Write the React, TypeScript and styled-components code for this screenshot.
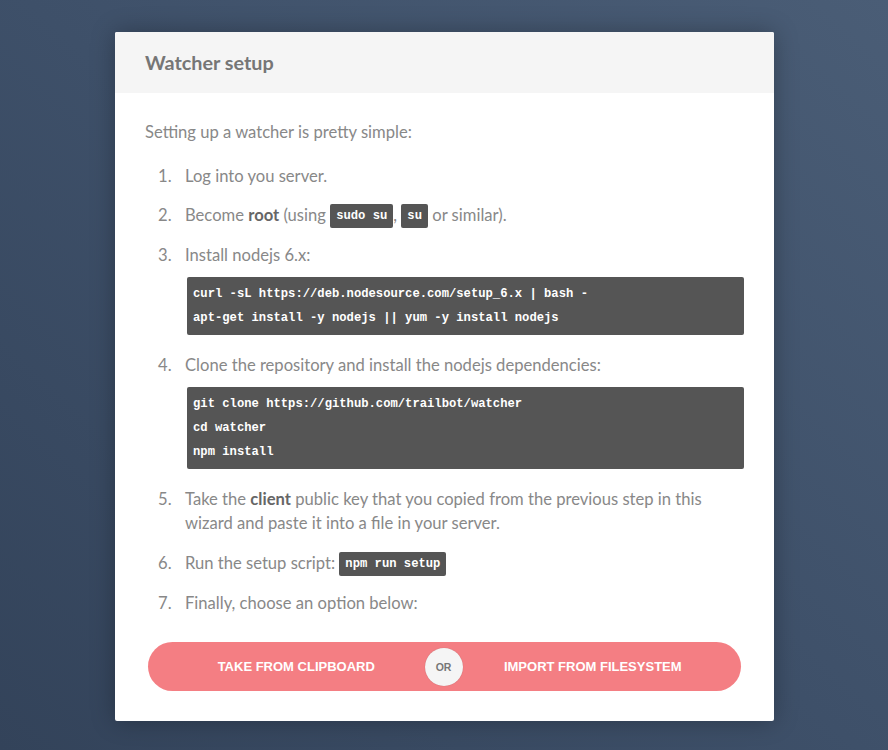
import React from "react";
import styled, { createGlobalStyle } from "styled-components";

const Global = createGlobalStyle`
  html, body { margin: 0; padding: 0; }
  body {
    width: 888px;
    height: 750px;
    overflow: hidden;
    background: linear-gradient(42deg, #33435a 0%, #3e5069 50%, #4a5d76 100%);
    font-family: Lato, "Open Sans", sans-serif;
  }
`;

const Page = styled.div`
  display: flex;
  justify-content: center;
  padding-top: 32px;
  height: 750px;
  box-sizing: border-box;
`;

const Card = styled.div`
  width: 659px;
  height: 689px;
  background: #fff;
  border-radius: 2px;
  box-shadow: 0 0 24px rgba(0, 0, 0, 0.28);
  display: flex;
  flex-direction: column;
  margin-left: 1px;
`;

const Header = styled.div`
  background: #f5f5f5;
  height: 65px;
  display: flex;
  align-items: center;
  padding: 0 30px;
  border-radius: 2px 2px 0 0;
`;

const Title = styled.h1`
  margin: 0;
  font-size: 19.8px;
  font-weight: 700;
  color: #767676;
  transform: translateY(-1px);
`;

const Body = styled.div`
  padding: 27px 30px 30px 30px;
  color: #888;
  font-size: 16.6px;
  line-height: 24px;
`;

const Intro = styled.p`
  margin: 0 0 20px 0;
`;

const Steps = styled.ol`
  list-style: none;
  margin: 0;
  padding: 0 0 0 13px;
  display: flex;
  flex-direction: column;
`;

const Step = styled.li<{ $gap?: number }>`
  display: flex;
  margin: 0 0 ${(p) => p.$gap ?? 15}px 0;
`;

const Num = styled.span`
  flex: none;
  width: 27px;
`;

const StepBody = styled.div`
  flex: 1;
  min-width: 0;
`;

const Strong = styled.b`
  color: #666;
  font-weight: 700;
`;

const Code = styled.code`
  display: inline-block;
  background: #555;
  color: #fff;
  font-family: "Liberation Mono", "Courier New", monospace;
  font-weight: 700;
  font-size: 12.2px;
  line-height: 24px;
  padding: 0 6px;
  border-radius: 2px;
  vertical-align: middle;
  margin-top: -2px;
`;

const Pre = styled.pre`
  margin: 10px 0 0 2px;
  background: #555;
  color: #fff;
  font-family: "Liberation Mono", "Courier New", monospace;
  font-weight: 700;
  font-size: 12.2px;
  line-height: 24px;
  padding: 5px 6px 5px 6px;
  border-radius: 2px;
  white-space: pre;
`;

const ButtonBar = styled.div`
  margin: 27px 3px 0 3px;
  height: 49px;
  border-radius: 25px;
  background: #f47e83;
  display: flex;
  align-items: center;
  position: relative;
`;

const Choice = styled.button`
  flex: 1;
  height: 100%;
  background: transparent;
  border: none;
  color: #fff;
  font-family: "Liberation Sans", Arial, sans-serif;
  font-weight: 700;
  font-size: 13px;
  text-transform: uppercase;
  cursor: pointer;
  padding: 0;
`;

const Or = styled.div`
  position: absolute;
  left: 50%;
  top: 50%;
  transform: translate(-50%, -50%);
  margin-left: -1px;
  width: 38px;
  height: 38px;
  border-radius: 50%;
  background: #f5f5f5;
  color: #777;
  font-family: "Liberation Sans", Arial, sans-serif;
  font-weight: 700;
  font-size: 10.5px;
  display: flex;
  align-items: center;
  justify-content: center;
  box-shadow: 0 0 1px rgba(0, 0, 0, 0.25);
`;

const steps: { gap?: number; content: React.ReactNode }[] = [
  { content: "Log into you server." },
  {
    content: (
      <>
        Become <Strong>root</Strong> (using <Code>sudo su</Code>, <Code>su</Code> or similar).
      </>
    ),
  },
  {
    gap: 18,
    content: (
      <>
        Install nodejs 6.x:
        <Pre>{"curl -sL https://deb.nodesource.com/setup_6.x | bash -\napt-get install -y nodejs || yum -y install nodejs"}</Pre>
      </>
    ),
  },
  {
    gap: 18,
    content: (
      <>
        Clone the repository and install the nodejs dependencies:
        <Pre>{"git clone https://github.com/trailbot/watcher\ncd watcher\nnpm install"}</Pre>
      </>
    ),
  },
  {
    gap: 16,
    content: (
      <>
        Take the <Strong>client</Strong> public key that you copied from the previous step in this wizard and paste it into a file in your server.
      </>
    ),
  },
  {
    gap: 15,
    content: (
      <>
        Run the setup script: <Code>npm run setup</Code>
      </>
    ),
  },
  { gap: 0, content: "Finally, choose an option below:" },
];

export default function App() {
  return (
    <>
      <Global />
      <Page>
        <Card>
          <Header>
            <Title>Watcher setup</Title>
          </Header>
          <Body>
            <Intro>Setting up a watcher is pretty simple:</Intro>
            <Steps>
              {steps.map((s, i) => (
                <Step key={i} $gap={s.gap}>
                  <Num>{i + 1}.</Num>
                  <StepBody>{s.content}</StepBody>
                </Step>
              ))}
            </Steps>
            <ButtonBar>
              <Choice>Take from clipboard</Choice>
              <Choice>Import from filesystem</Choice>
              <Or>OR</Or>
            </ButtonBar>
          </Body>
        </Card>
      </Page>
    </>
  );
}
